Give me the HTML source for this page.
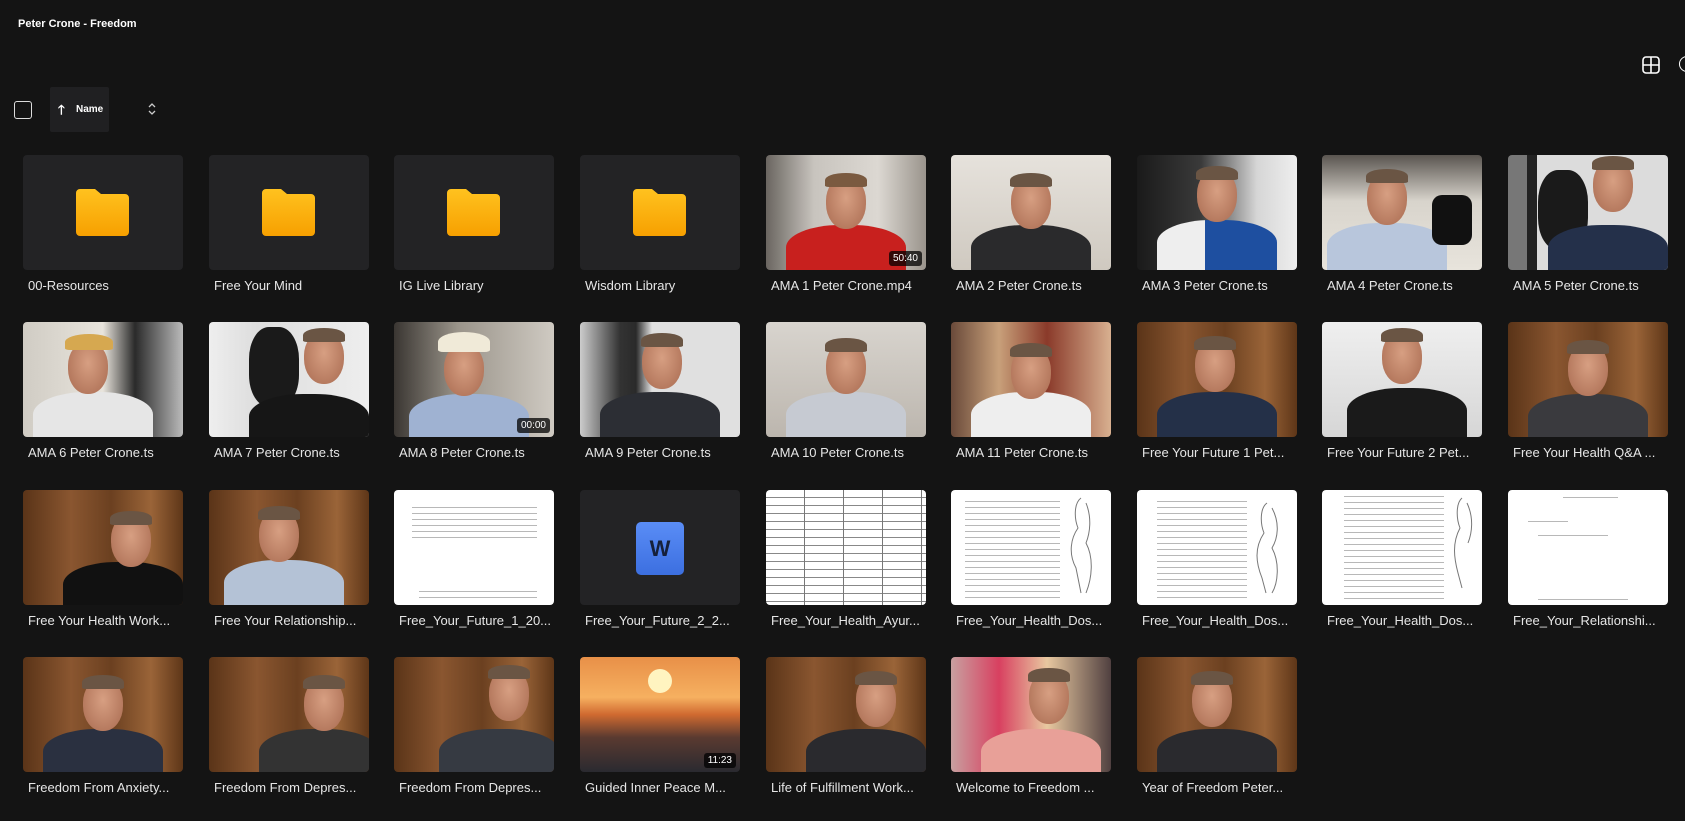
<!DOCTYPE html>
<html><head><meta charset="utf-8"><style>
*{margin:0;padding:0;box-sizing:border-box}
body{width:1685px;height:821px;background:#141414;overflow:hidden;font-family:"Liberation Sans",sans-serif;color:#e8e8e8;position:relative}
.t{position:absolute;width:160px;height:115px;border-radius:4px;overflow:hidden;background:#232325}
.l{position:absolute;font-size:13px;color:#e6e6e6;white-space:nowrap}
.fold{position:absolute;left:53px;top:34px;width:53px;height:47px}
.face{position:absolute;width:40px;height:52px;border-radius:45% 45% 48% 48%;background:radial-gradient(ellipse at 50% 40%,#d79f82,#a86a50)}
.hair{position:absolute;width:42px;height:14px;border-radius:50% 50% 10% 10%;background:#6a5544}
.body{position:absolute;width:120px;height:50px;border-radius:45% 45% 0 0}
.dur{position:absolute;right:4px;bottom:4px;background:rgba(0,0,0,.75);color:#fff;font-size:10px;padding:2px 4px;border-radius:3px}
.doc{background:#fff}
.lines{position:absolute;background:repeating-linear-gradient(#fff 0 3px,#b8b8b8 3px 4px,#fff 4px 6px)}
.wood{background:linear-gradient(90deg,#5a3418,#8a5630 30%,#6b4020 55%,#9a6438 80%,#5e3618)}
</style></head><body>
<div style="position:absolute;left:18px;top:18px;font-size:11px;font-weight:bold;color:#fff">Peter Crone - Freedom</div>
<svg style="position:absolute;left:1642px;top:56px" width="18" height="18" viewBox="0 0 18 18"><rect x="1" y="1" width="16" height="16" rx="3" fill="none" stroke="#fff" stroke-width="1.6"/><path d="M9 1V17M1 9H17" stroke="#fff" stroke-width="1.6"/></svg>
<div style="position:absolute;left:1679px;top:56px;width:16px;height:16px;border:1.6px solid #fff;border-radius:50%"></div>
<div style="position:absolute;left:14px;top:101px;width:18px;height:18px;border:1.5px solid #ddd;border-radius:3px"></div>
<div style="position:absolute;left:50px;top:87px;width:59px;height:45px;background:#202022;border-radius:2px"></div>
<div style="position:absolute;left:58px;top:101px;font-size:13px;color:#fff;font-weight:bold">🡑</div>
<div style="position:absolute;left:76px;top:104px;font-size:10px;color:#fff;font-weight:bold">Name</div>
<svg style="position:absolute;left:147px;top:102px" width="10" height="14" viewBox="0 0 10 14"><path d="M2 5L5 2L8 5M2 9L5 12L8 9" fill="none" stroke="#ccc" stroke-width="1.3"/></svg>

<!-- ROW 1 y=155 -->
<div class="t" style="left:23px;top:155px"><svg class="fold" viewBox="0 0 53 47"><defs><linearGradient id="g" x1="0" y1="0" x2="0" y2="1"><stop offset="0" stop-color="#ffc21f"/><stop offset="1" stop-color="#f7a000"/></linearGradient></defs><path d="M4 0H19L25 5H49A4 4 0 0 1 53 9V43A4 4 0 0 1 49 47H4A4 4 0 0 1 0 43V4A4 4 0 0 1 4 0Z" fill="url(#g)"/></svg></div>
<div class="l" style="left:28px;top:278px">00-Resources</div>
<div class="t" style="left:209px;top:155px"><svg class="fold" viewBox="0 0 53 47"><path d="M4 0H19L25 5H49A4 4 0 0 1 53 9V43A4 4 0 0 1 49 47H4A4 4 0 0 1 0 43V4A4 4 0 0 1 4 0Z" fill="url(#g)"/></svg></div>
<div class="l" style="left:214px;top:278px">Free Your Mind</div>
<div class="t" style="left:394px;top:155px"><svg class="fold" viewBox="0 0 53 47"><path d="M4 0H19L25 5H49A4 4 0 0 1 53 9V43A4 4 0 0 1 49 47H4A4 4 0 0 1 0 43V4A4 4 0 0 1 4 0Z" fill="url(#g)"/></svg></div>
<div class="l" style="left:399px;top:278px">IG Live Library</div>
<div class="t" style="left:580px;top:155px"><svg class="fold" viewBox="0 0 53 47"><path d="M4 0H19L25 5H49A4 4 0 0 1 53 9V43A4 4 0 0 1 49 47H4A4 4 0 0 1 0 43V4A4 4 0 0 1 4 0Z" fill="url(#g)"/></svg></div>
<div class="l" style="left:585px;top:278px">Wisdom Library</div>

<div class="t" style="left:766px;top:155px;background:linear-gradient(90deg,#6a6560,#c8c4be 30%,#dcd8d2 70%,#9a948c)"><div class="body" style="left:20px;top:70px;background:#c8201e"></div><div class="face" style="left:60px;top:22px"></div><div class="hair" style="left:59px;top:18px;background:#7a5a40"></div><div class="dur">50:40</div></div>
<div class="l" style="left:771px;top:278px">AMA 1 Peter Crone.mp4</div>
<div class="t" style="left:951px;top:155px;background:linear-gradient(180deg,#e6e2dc,#cfc9c0)"><div class="body" style="left:20px;top:70px;background:#2a2a2c"></div><div class="face" style="left:60px;top:22px"></div><div class="hair" style="left:59px;top:18px"></div></div>
<div class="l" style="left:956px;top:278px">AMA 2 Peter Crone.ts</div>
<div class="t" style="left:1137px;top:155px;background:linear-gradient(90deg,#1a1a1a,#3a3a3a 40%,#d6d6d6 75%,#eee)"><div class="body" style="left:20px;top:65px;background:linear-gradient(90deg,#eee 40%,#1e4fa0 40%)"></div><div class="face" style="left:60px;top:15px"></div><div class="hair" style="left:59px;top:11px"></div></div>
<div class="l" style="left:1142px;top:278px">AMA 3 Peter Crone.ts</div>
<div class="t" style="left:1322px;top:155px;background:linear-gradient(180deg,#5a5550,#d8d4cc 40%,#e8e4dc)"><div class="body" style="left:5px;top:68px;background:#b8c6dc"></div><div class="face" style="left:45px;top:18px"></div><div class="hair" style="left:44px;top:14px"></div><div style="position:absolute;left:110px;top:40px;width:40px;height:50px;background:#111;border-radius:10px"></div></div>
<div class="l" style="left:1327px;top:278px">AMA 4 Peter Crone.ts</div>
<div class="t" style="left:1508px;top:155px;background:linear-gradient(90deg,#777 0 12%,#222 12% 18%,#dcdcdc 18%)"><div style="position:absolute;left:30px;top:15px;width:50px;height:80px;background:#1a1a1a;border-radius:40%"></div><div class="body" style="left:40px;top:70px;background:#24304a"></div><div class="face" style="left:85px;top:5px"></div><div class="hair" style="left:84px;top:1px"></div></div>
<div class="l" style="left:1513px;top:278px">AMA 5 Peter Crone.ts</div>

<!-- ROW 2 y=322 -->
<div class="t" style="left:23px;top:322px;background:linear-gradient(90deg,#d0ccc4,#e8e4dc 50%,#2a2a2a 70%,#bbb)"><div class="body" style="left:10px;top:70px;background:#e6e6e6"></div><div class="face" style="left:45px;top:20px"></div><div class="hair" style="left:42px;top:12px;width:48px;height:16px;background:#d6a850"></div></div>
<div class="l" style="left:28px;top:445px">AMA 6 Peter Crone.ts</div>
<div class="t" style="left:209px;top:322px;background:linear-gradient(90deg,#eee,#ddd 30%,#eee)"><div style="position:absolute;left:40px;top:5px;width:50px;height:80px;background:#1a1a1a;border-radius:40%"></div><div class="body" style="left:40px;top:72px;background:#161616"></div><div class="face" style="left:95px;top:10px"></div><div class="hair" style="left:94px;top:6px"></div></div>
<div class="l" style="left:214px;top:445px">AMA 7 Peter Crone.ts</div>
<div class="t" style="left:394px;top:322px;background:linear-gradient(90deg,#3a3632,#9a948a 40%,#cfcac2)"><div class="body" style="left:15px;top:72px;background:#9fb2d2"></div><div class="face" style="left:50px;top:22px"></div><div class="hair" style="left:44px;top:10px;width:52px;height:20px;background:#f0ead8"></div><div class="dur">00:00</div></div>
<div class="l" style="left:399px;top:445px">AMA 8 Peter Crone.ts</div>
<div class="t" style="left:580px;top:322px;background:linear-gradient(90deg,#ccc,#333 25%,#2a2a2a 35%,#e0e0e0 45%)"><div class="body" style="left:20px;top:70px;background:#2c2e34"></div><div class="face" style="left:62px;top:15px"></div><div class="hair" style="left:61px;top:11px"></div></div>
<div class="l" style="left:585px;top:445px">AMA 9 Peter Crone.ts</div>
<div class="t" style="left:766px;top:322px;background:linear-gradient(180deg,#d8d4ce,#bcb6ae)"><div class="body" style="left:20px;top:70px;background:#c6cad2"></div><div class="face" style="left:60px;top:20px"></div><div class="hair" style="left:59px;top:16px"></div></div>
<div class="l" style="left:771px;top:445px">AMA 10 Peter Crone.ts</div>
<div class="t" style="left:951px;top:322px;background:linear-gradient(90deg,#6a4a3a,#c8a07a 30%,#8a3a2a 60%,#d8b090)"><div class="body" style="left:20px;top:70px;background:#eeeeee"></div><div class="face" style="left:60px;top:25px"></div><div class="hair" style="left:59px;top:21px"></div></div>
<div class="l" style="left:956px;top:445px">AMA 11 Peter Crone.ts</div>
<div class="t wood" style="left:1137px;top:322px"><div class="body" style="left:20px;top:70px;background:#243048"></div><div class="face" style="left:58px;top:18px"></div><div class="hair" style="left:57px;top:14px"></div></div>
<div class="l" style="left:1142px;top:445px">Free Your Future 1 Pet...</div>
<div class="t" style="left:1322px;top:322px;background:linear-gradient(180deg,#efefef,#d6d6d6)"><div class="body" style="left:25px;top:66px;background:#1a1a1a"></div><div class="face" style="left:60px;top:10px"></div><div class="hair" style="left:59px;top:6px"></div></div>
<div class="l" style="left:1327px;top:445px">Free Your Future 2 Pet...</div>
<div class="t wood" style="left:1508px;top:322px"><div class="body" style="left:20px;top:72px;background:#3a3a3e"></div><div class="face" style="left:60px;top:22px"></div><div class="hair" style="left:59px;top:18px"></div></div>
<div class="l" style="left:1513px;top:445px">Free Your Health Q&amp;A ...</div>

<!-- ROW 3 y=490 -->
<div class="t wood" style="left:23px;top:490px"><div class="body" style="left:40px;top:72px;background:#111"></div><div class="face" style="left:88px;top:25px"></div><div class="hair" style="left:87px;top:21px"></div></div>
<div class="l" style="left:28px;top:613px">Free Your Health Work...</div>
<div class="t wood" style="left:209px;top:490px"><div class="body" style="left:15px;top:70px;background:#b4c2d6"></div><div class="face" style="left:50px;top:20px"></div><div class="hair" style="left:49px;top:16px"></div></div>
<div class="l" style="left:214px;top:613px">Free Your Relationship...</div>
<div class="t doc" style="left:394px;top:490px"><div class="lines" style="left:18px;top:14px;width:125px;height:34px"></div><div class="lines" style="left:25px;top:98px;width:118px;height:14px"></div></div>
<div class="l" style="left:399px;top:613px">Free_Your_Future_1_20...</div>
<div class="t" style="left:580px;top:490px"><div style="position:absolute;left:56px;top:32px;width:48px;height:53px;border-radius:5px;background:linear-gradient(#5a8df6,#3c6fe0);color:#15203a;font-weight:bold;font-size:22px;text-align:center;line-height:53px">W</div></div>
<div class="l" style="left:585px;top:613px">Free_Your_Future_2_2...</div>
<div class="t doc" style="left:766px;top:490px;background:#fff repeating-linear-gradient(#fff 0 7px,#888 7px 8px)"><div style="position:absolute;inset:0;background:repeating-linear-gradient(90deg,transparent 0 38px,#777 38px 39px)"></div></div>
<div class="l" style="left:771px;top:613px">Free_Your_Health_Ayur...</div>
<div class="t doc" style="left:951px;top:490px"><div class="lines" style="left:14px;top:8px;width:95px;height:100px"></div><svg style="position:absolute;left:105px;top:3px" width="50" height="105"><path d="M25 5C18 10 18 25 22 35C15 45 12 60 20 75L25 100M30 10C36 25 34 40 30 50C38 65 36 85 30 100" fill="none" stroke="#777"/></svg></div>
<div class="l" style="left:956px;top:613px">Free_Your_Health_Dos...</div>
<div class="t doc" style="left:1137px;top:490px"><div class="lines" style="left:20px;top:8px;width:90px;height:100px"></div><svg style="position:absolute;left:105px;top:8px" width="50" height="100"><path d="M25 5C18 10 18 25 22 35C12 50 14 65 20 80L24 95M30 10C38 25 36 40 30 50C38 65 36 85 30 95" fill="none" stroke="#777"/></svg></div>
<div class="l" style="left:1142px;top:613px">Free_Your_Health_Dos...</div>
<div class="t doc" style="left:1322px;top:490px"><div class="lines" style="left:22px;top:3px;width:100px;height:108px"></div><svg style="position:absolute;left:120px;top:3px" width="40" height="105"><path d="M20 5C14 10 14 25 18 35C10 50 12 65 16 80L20 95M25 10C32 25 30 40 26 50" fill="none" stroke="#777"/></svg></div>
<div class="l" style="left:1327px;top:613px">Free_Your_Health_Dos...</div>
<div class="t doc" style="left:1508px;top:490px"><div class="lines" style="left:55px;top:4px;width:55px;height:6px"></div><div class="lines" style="left:20px;top:28px;width:40px;height:4px"></div><div class="lines" style="left:30px;top:42px;width:70px;height:4px"></div><div class="lines" style="left:30px;top:106px;width:90px;height:4px"></div></div>
<div class="l" style="left:1513px;top:613px">Free_Your_Relationshi...</div>

<!-- ROW 4 y=657 -->
<div class="t wood" style="left:23px;top:657px"><div class="body" style="left:20px;top:72px;background:#2a3040"></div><div class="face" style="left:60px;top:22px"></div><div class="hair" style="left:59px;top:18px"></div></div>
<div class="l" style="left:28px;top:780px">Freedom From Anxiety...</div>
<div class="t wood" style="left:209px;top:657px"><div class="body" style="left:50px;top:72px;background:#333"></div><div class="face" style="left:95px;top:22px"></div><div class="hair" style="left:94px;top:18px"></div></div>
<div class="l" style="left:214px;top:780px">Freedom From Depres...</div>
<div class="t wood" style="left:394px;top:657px"><div class="body" style="left:45px;top:72px;background:#363a42"></div><div class="face" style="left:95px;top:12px"></div><div class="hair" style="left:94px;top:8px"></div></div>
<div class="l" style="left:399px;top:780px">Freedom From Depres...</div>
<div class="t" style="left:580px;top:657px;background:linear-gradient(180deg,#e89048 0%,#f6b060 35%,#d06a30 50%,#5a3a30 70%,#2a2a30)"><div style="position:absolute;left:68px;top:12px;width:24px;height:24px;border-radius:50%;background:#fff4c0"></div><div class="dur">11:23</div></div>
<div class="l" style="left:585px;top:780px">Guided Inner Peace M...</div>
<div class="t wood" style="left:766px;top:657px"><div class="body" style="left:40px;top:72px;background:#2a2a2e"></div><div class="face" style="left:90px;top:18px"></div><div class="hair" style="left:89px;top:14px"></div></div>
<div class="l" style="left:771px;top:780px">Life of Fulfillment Work...</div>
<div class="t" style="left:951px;top:657px;background:linear-gradient(90deg,#c8a0a0,#d84060 30%,#e8c8a0 60%,#504040)"><div class="body" style="left:30px;top:72px;background:#e8a098"></div><div class="face" style="left:78px;top:15px"></div><div class="hair" style="left:77px;top:11px"></div></div>
<div class="l" style="left:956px;top:780px">Welcome to Freedom ...</div>
<div class="t wood" style="left:1137px;top:657px"><div class="body" style="left:20px;top:72px;background:#2a2a2e"></div><div class="face" style="left:55px;top:18px"></div><div class="hair" style="left:54px;top:14px"></div></div>
<div class="l" style="left:1142px;top:780px">Year of Freedom Peter...</div>
</body></html>
